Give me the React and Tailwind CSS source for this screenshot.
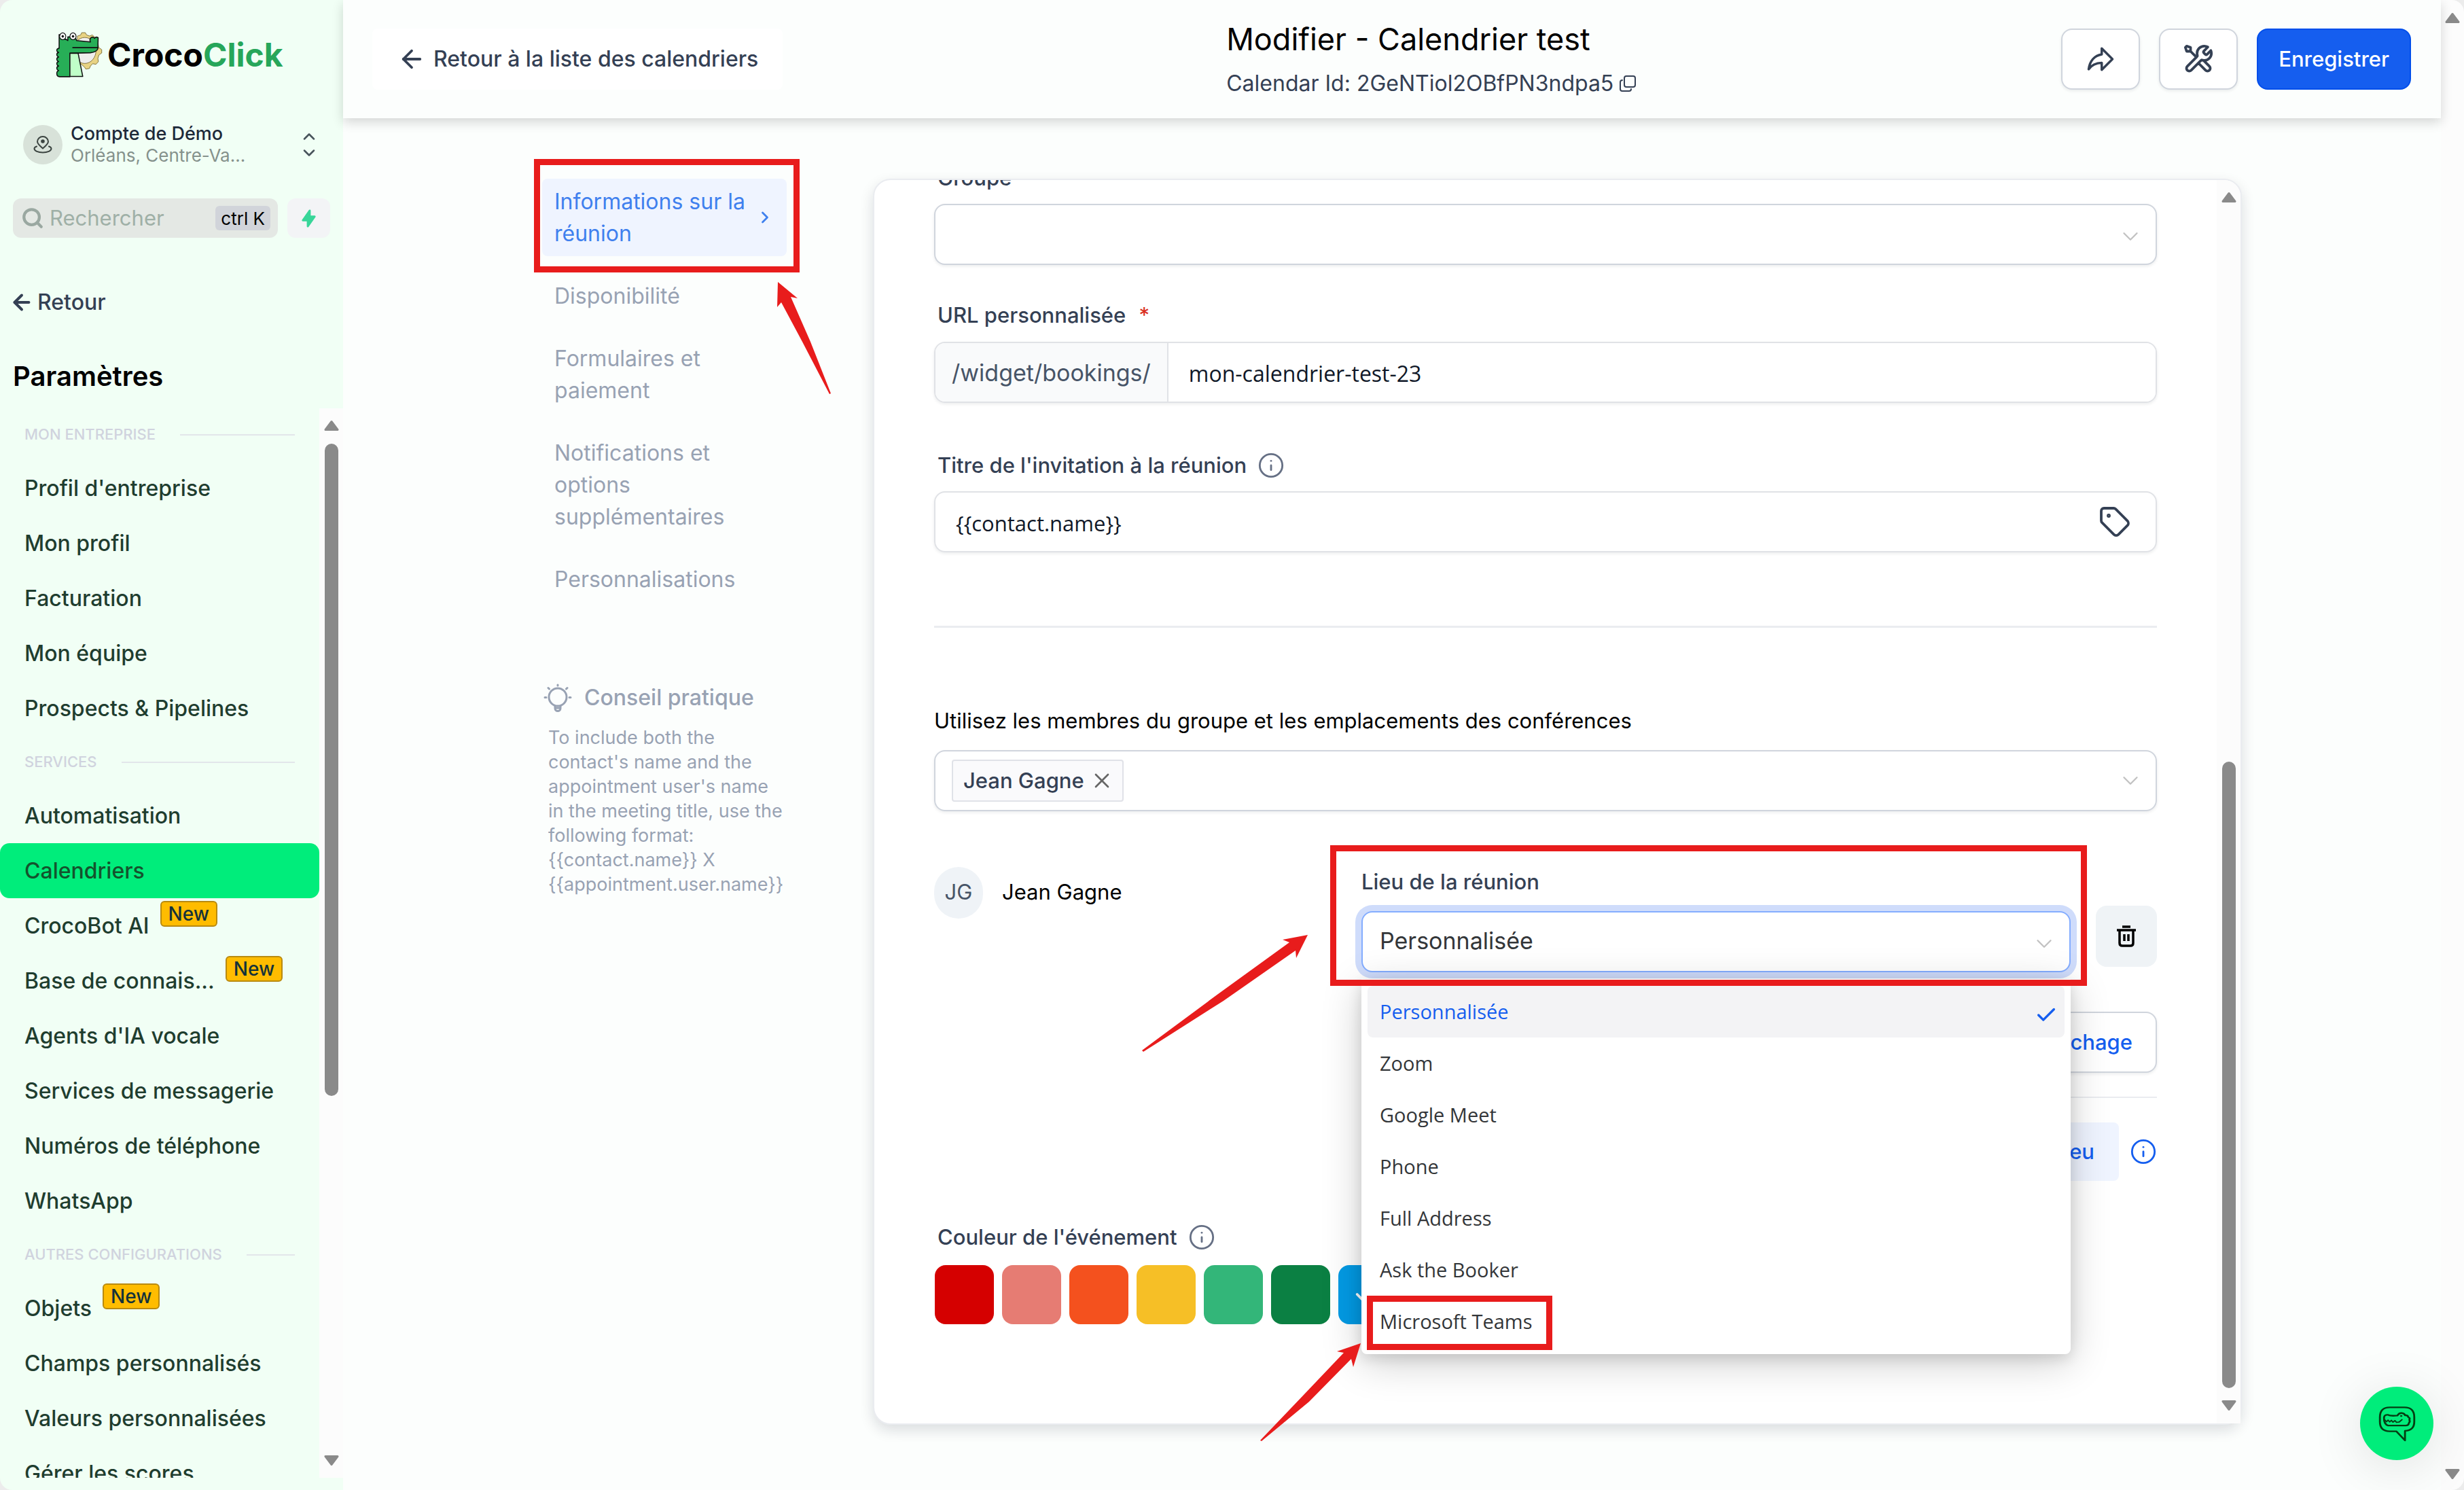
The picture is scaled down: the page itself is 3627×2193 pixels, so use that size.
import React from "react";
import { ArrowLeft, Check, ChevronDown, ChevronRight, ChevronUp, Info, Search, Tag, X } from "lucide-react";

const sections = [
  {
    title: "MON ENTREPRISE",
    items: [
      { label: "Profil d'entreprise" },
      { label: "Mon profil" },
      { label: "Facturation" },
      { label: "Mon équipe" },
      { label: "Prospects & Pipelines" },
    ],
  },
  {
    title: "SERVICES",
    items: [
      { label: "Automatisation" },
      { label: "Calendriers", active: true },
      { label: "CrocoBot AI", isNew: true },
      { label: "Base de connais...", isNew: true },
      { label: "Agents d'IA vocale" },
      { label: "Services de messagerie" },
      { label: "Numéros de téléphone" },
      { label: "WhatsApp" },
    ],
  },
  {
    title: "AUTRES CONFIGURATIONS",
    items: [
      { label: "Objets", isNew: true },
      { label: "Champs personnalisés" },
      { label: "Valeurs personnalisées" },
      { label: "Gérer les scores" },
    ],
  },
];

const steps = [
  "Disponibilité",
  "Formulaires et paiement",
  "Notifications et options supplémentaires",
  "Personnalisations",
];

const places = ["Personnalisée", "Zoom", "Google Meet", "Phone", "Full Address", "Ask the Booker", "Microsoft Teams"];

const colors = [
  ["Rouge", "bg-[#d50000]"],
  ["Rose", "bg-[#e67c73]"],
  ["Orange", "bg-[#f4511e]"],
  ["Jaune", "bg-[#f6bf26]"],
  ["Vert clair", "bg-[#33b679]"],
  ["Vert", "bg-[#0b8043]"],
  ["Bleu", "bg-[#039be5]"],
];

const fieldShadow = "shadow-[0_2px_4px_rgba(16,24,40,0.08)]";

function Triangle({ down }) {
  return (
    <svg viewBox="0 0 22 17" className={down ? "h-[17px] w-[22px] rotate-180" : "h-[17px] w-[22px]"} aria-hidden="true">
      <path d="M11 2.5 20 14.5H2Z" fill="#8a8a8a" stroke="#8a8a8a" strokeWidth="3" strokeLinejoin="round" />
    </svg>
  );
}

function CrocLogo() {
  return (
    <svg viewBox="212 108 188 166" preserveAspectRatio="none" className="h-[69px] w-[71px]" aria-hidden="true">
      <g stroke="#111" strokeWidth="4" strokeLinejoin="round" strokeLinecap="round">
        <path
          d="M300 125l12-4 4-8h14l5 8 12 4 10-4 10 8 2 12 10 6 3 18 12 8v12l-11 7-4 12 2 12-10 9-12-2-9 8-4 9-14 2-6-8-26-20Z"
          fill="#e8d384"
          stroke="#6b5b26"
          strokeWidth="2"
        />
        <ellipse cx="328" cy="176" rx="44" ry="46" fill="#efeeee" stroke="#6b5b26" strokeWidth="2" />
        <path
          d="M228 120V168q-10 2-9 9 1 5 7 6-8 2-7 9 1 6 7 7-8 2-7 9 1 6 7 7-8 2-7 9 1 6 7 7-8 2-7 9 1 6 7 7-8 3-7 12 0 9 11 10H270V186L350 184Q374 182 379 170L380 131Q372 126 366 133 358 125 350 133 346 138 350 146L296 141 290 128H262V141Q256 136 250 136Z"
          fill="#27ae57"
        />
        <path d="M270 186H302L320 268H270Z" fill="#c0ffc8" />
        <path d="M281 166H379" fill="none" />
        <circle cx="242" cy="126" r="12" fill="#fff" strokeWidth="3" />
        <circle cx="282" cy="126" r="12" fill="#fff" strokeWidth="3" />
        <circle cx="242" cy="126" r="4" fill="#111" strokeWidth="1" />
        <circle cx="282" cy="126" r="4" fill="#111" strokeWidth="1" />
      </g>
    </svg>
  );
}

function PinIcon() {
  return (
    <svg viewBox="0 0 28 26" className="h-[26px] w-[28px]" fill="none" stroke="#3b4440" strokeWidth="2" strokeLinecap="round" strokeLinejoin="round" aria-hidden="true">
      <path d="M14 18.500C9.500 14.500 6 11.500 6 8.500a8 7.500 0 0 1 16 0c0 3-3.500 6-8 10Z" />
      <circle cx="14" cy="8" r="1.800" fill="#3b4440" />
      <path d="M5 15.500c-2.300.8-3.500 1.900-3.500 3.300 0 3.400 5.600 5.700 12.500 5.700s12.500-2.300 12.500-5.700c0-1.400-1.200-2.500-3.500-3.300" />
    </svg>
  );
}

function BulbIcon() {
  return (
    <svg viewBox="0 0 42 42" className="h-[42px] w-[42px]" fill="none" stroke="#98a2b3" strokeWidth="3" strokeLinecap="round" aria-hidden="true">
      <circle cx="21" cy="20" r="13" />
      <path d="M17 33v3.500a4 4 0 0 0 8 0V33M17.500 36h7M21 2v1M2 20.500h2M38 20.500h2M7 6.500l1.500 1.500M35 6.500 33.500 8" />
    </svg>
  );
}

function TrashIcon() {
  return (
    <svg viewBox="0 0 30 32" className="h-[32px] w-[30px]" fill="none" stroke="#000" strokeWidth="3.500" aria-hidden="true">
      <path d="M9 2h12M1 7h28M5 8v18q0 4 4 4h12q4 0 4-4V8M12 13v10M18 13v10" />
    </svg>
  );
}

function ShareIcon() {
  return (
    <svg viewBox="0 0 24 24" className="h-[42px] w-[42px]" fill="none" stroke="#344054" strokeWidth="2" strokeLinejoin="round" aria-hidden="true">
      <path d="M22 12 13 3v5C7 9 3 13.500 2 20.500c2.600-3.600 6-5.200 11-5.300V21Z" />
    </svg>
  );
}

function ToolsIcon() {
  return (
    <svg viewBox="0 0 24 24" className="h-[46px] w-[46px]" fill="none" stroke="#344054" strokeWidth="2" strokeLinecap="round" strokeLinejoin="round" aria-hidden="true">
      <path d="M6 6L10.5 10.5M6 6H3L2 3L3 2L6 3V6ZM19.259 2.741L16.631 5.369C16.235 5.765 16.037 5.963 15.963 6.191C15.898 6.392 15.898 6.608 15.963 6.809C16.037 7.037 16.235 7.235 16.631 7.631L16.869 7.869C17.265 8.265 17.463 8.463 17.691 8.537C17.892 8.602 18.108 8.602 18.309 8.537C18.537 8.463 18.735 8.265 19.131 7.869L21.589 5.411C21.854 6.055 22 6.760 22 7.5C22 10.538 19.538 13 16.5 13C16.134 13 15.776 12.964 15.430 12.896C14.944 12.800 14.700 12.752 14.553 12.767C14.396 12.782 14.319 12.806 14.180 12.880C14.050 12.950 13.919 13.081 13.657 13.343L6.5 20.5C5.672 21.328 4.328 21.328 3.5 20.5C2.672 19.672 2.672 18.328 3.5 17.5L10.657 10.343C10.919 10.081 11.050 9.950 11.120 9.819C11.194 9.681 11.218 9.603 11.233 9.447C11.248 9.299 11.200 9.056 11.104 8.570C11.036 8.224 11 7.866 11 7.5C11 4.462 13.462 2 16.5 2C17.506 2 18.448 2.270 19.259 2.741ZM12 15L17.5 20.5C18.328 21.328 19.672 21.328 20.5 20.5C21.328 19.671 21.328 18.328 20.5 17.5L15.975 12.975C15.655 12.945 15.343 12.887 15.041 12.804C14.652 12.697 14.225 12.775 13.940 13.060L12 15Z" />
    </svg>
  );
}

function CopyIcon() {
  return (
    <svg viewBox="0 0 26 26" className="h-[26px] w-[26px]" fill="none" stroke="#344054" strokeWidth="2" strokeLinejoin="round" aria-hidden="true">
      <rect x="8" y="2" width="16" height="16" rx="3" />
      <path d="M5 8q-3 0-3 3v10q0 3 3 3h10q3 0 3-3" strokeLinecap="round" />
    </svg>
  );
}

function ChatCrocIcon() {
  return (
    <svg viewBox="1250 1110 142 158" preserveAspectRatio="none" className="h-[53px] w-[57px]" fill="none" stroke="#053d12" strokeWidth="7" strokeLinejoin="round" strokeLinecap="round" aria-hidden="true">
      <path d="M1294 1117H1348Q1384 1117 1384 1160V1180Q1384 1218 1350 1220V1262L1318 1222H1294Q1258 1222 1258 1180V1160Q1258 1117 1294 1117Z" />
      <path d="M1288 1197Q1272 1190 1273 1162 1274 1148 1288 1150 1296 1156 1322 1153 1328 1141 1338 1142 1348 1143 1350 1152 1360 1150 1362 1160 1370 1164 1366 1172 1370 1180 1364 1186 1364 1196 1352 1197Z" />
      <path d="M1276 1172l6 8 6-7 6 8 6-7 6 8 7-7 6 8 10-2 10-10" strokeWidth="5" />
      <circle cx="1336" cy="1155" r="3" fill="#053d12" strokeWidth="2" />
    </svg>
  );
}

function InfoButton({ blue }) {
  return (
    <button type="button" aria-label="Informations" className={blue ? "text-[#155eef]" : "text-[#667085]"}>
      <Info className="size-10" strokeWidth={1.7} />
    </button>
  );
}

function Sidebar() {
  return (
    <aside className="flex w-[505px] shrink-0 flex-col overflow-hidden bg-[#f1fff5]">
      <a href="#accueil" className="mt-[46px] flex items-center gap-[6px] pl-[81px]">
        <CrocLogo />
        <span className="text-[48px] leading-[66px] font-bold text-black">
          Croco<span className="text-[#27a65a]">Click</span>
        </span>
      </a>

      <button type="button" className="mt-[66px] flex items-center pr-[36px] pl-[34px] text-left">
        <span className="flex size-[58px] shrink-0 items-center justify-center rounded-full bg-[#d8e2d9]">
          <PinIcon />
        </span>
        <span className="ml-3 flex flex-1 flex-col leading-8">
          <span className="text-[27px] font-medium text-[#1d2939]">Compte de Démo</span>
          <span className="text-[26px] text-[#85918c]">Orléans, Centre-Va...</span>
        </span>
        <span className="flex flex-col text-[#48545b]">
          <ChevronUp className="-mb-1 size-7" strokeWidth={2.2} />
          <ChevronDown className="size-7" strokeWidth={2.2} />
        </span>
      </button>

      <div className="mt-[47px] flex gap-[14px] px-[19px]">
        <div className="flex h-[58px] flex-1 items-center rounded-xl bg-[#e4e8e4] pr-[11px] pl-3">
          <Search className="size-[34px] shrink-0 text-[#9aa8a1]" strokeWidth={3} />
          <input
            type="text"
            aria-label="Rechercher"
            placeholder="Rechercher"
            className="ml-2 w-0 flex-1 bg-transparent text-[31px] outline-none placeholder:text-[#9fb0a7]"
          />
          <kbd className="flex h-9 items-center rounded-md bg-[#d1d4da] px-[8px] font-[Inter] text-[26px] text-black">ctrl K</kbd>
        </div>
        <button type="button" aria-label="Actions rapides" className="flex h-[58px] w-[63px] items-center justify-center rounded-xl bg-[#f3f4f6]">
          <svg viewBox="0 0 20 20" className="size-[29px]" fill="#38d699" aria-hidden="true">
            <path d="M11.300 1.046A1 1 0 0112 2v5h4a1 1 0 01.82 1.573l-7 10A1 1 0 018 18v-5H4a1 1 0 01-.82-1.573l7-10a1 1 0 011.120-.38z" />
          </svg>
        </button>
      </div>

      <a href="#retour" className="mt-[72px] flex items-center gap-[5px] pl-[14px] text-[32px] leading-[46px] font-medium text-[#344054]">
        <ArrowLeft className="size-[36px]" strokeWidth={2.6} />
        Retour
      </a>
      <h2 className="mt-[56px] pl-[19px] text-[40px] leading-[60px] font-semibold text-black">Paramètres</h2>

      <div className="mt-[17px] mb-[18px] flex min-h-0 flex-1">
        <nav aria-label="Paramètres" className="h-full flex-1 overflow-hidden">
          {sections.map((section) => (
            <section key={section.title}>
              <h3 className="flex h-[77px] items-center gap-9 pr-9 pl-9 text-[22px] font-medium text-[#d0d3de]">
                {section.title}
                <span className="h-[2px] flex-1 bg-[#e2e6ea]" />
              </h3>
              <ul>
                {section.items.map((item) => (
                  <li key={item.label}>
                    <a
                      href="#reglage"
                      className={
                        item.active
                          ? "flex h-[81px] items-center rounded-[14px] bg-[#00ed7b] pl-9 text-[32px] font-medium text-[#14532d]"
                          : "flex h-[81px] items-center pl-9 text-[32px] font-medium text-[#1f3d2f]"
                      }
                    >
                      <span className="leading-[46px] whitespace-nowrap">{item.label}</span>
                      {item.isNew && (
                        <span className="mt-1 ml-4 flex h-[38px] items-center self-start rounded-md border-2 border-[#b98a10] bg-[#ffbc00] px-[10px] text-[28px] text-[#14323a]">
                          New
                        </span>
                      )}
                    </a>
                  </li>
                ))}
              </ul>
            </section>
          ))}
        </nav>
        <div className="flex w-[35px] flex-col items-center bg-[#fcfcfc] pt-[17px] pb-[17px]">
          <Triangle />
          <div className="mt-[18px] h-[960px] w-5 rounded-full bg-[#8a8a8a]" />
          <div className="flex-1" />
          <Triangle down />
        </div>
      </div>
    </aside>
  );
}

function Header() {
  return (
    <header className="z-10 flex h-[174px] shrink-0 items-center justify-between bg-[#fcfefd] pr-11 pl-[43px] shadow-[0_6px_16px_rgba(0,0,0,0.16)]">
      <button type="button" className="flex h-[90px] items-center gap-[11px] rounded-lg bg-white pr-9 pl-[37px] text-[32px] font-medium text-[#344054]">
        <ArrowLeft className="size-[42px]" strokeWidth={2.2} />
        Retour à la liste des calendriers
      </button>
      <div className="pl-7">
        <h1 className="text-[45px] leading-[60px] text-black">Modifier - Calendrier test</h1>
        <p className="mt-3 flex items-center gap-2 text-[32px] leading-[46px] text-[#344054]">
          Calendar Id: 2GeNTiol2OBfPN3ndpa5
          <button type="button" aria-label="Copier l'identifiant">
            <CopyIcon />
          </button>
        </p>
      </div>
      <div className="flex gap-7">
        <button type="button" aria-label="Partager" className={`flex h-[90px] w-[116px] items-center justify-center rounded-2xl border-2 border-[#d0d5dd] bg-white ${fieldShadow}`}>
          <ShareIcon />
        </button>
        <button type="button" aria-label="Outils" className={`flex h-[90px] w-[116px] items-center justify-center rounded-2xl border-2 border-[#d0d5dd] bg-white ${fieldShadow}`}>
          <ToolsIcon />
        </button>
        <button type="button" className="h-[90px] rounded-2xl border-2 border-[#004eeb] bg-[#155eef] px-[30px] text-[31px] font-medium text-white">
          Enregistrer
        </button>
      </div>
    </header>
  );
}

function StepNav() {
  return (
    <div className="w-[360px] shrink-0">
      <nav aria-label="Étapes" className="flex flex-col gap-[25px] text-[32px] leading-[47px]">
        <div className="relative">
          <a href="#infos" aria-current="step" className="flex items-center justify-between rounded-lg bg-[#eff4ff] py-[10px] pr-[18px] pl-[18px] text-[#3f80ee]">
            <span className="w-[300px]">Informations sur la réunion</span>
            <ChevronRight className="size-[28px] shrink-0" strokeWidth={2.4} />
          </a>
          <div className="absolute -top-[29px] -right-[19px] -bottom-[24px] -left-[12px] border-[9px] border-[#e81c1c]" />
          <svg viewBox="0 0 80 166" className="absolute top-[152px] left-[346px] h-[166px] w-[80px]" fill="#e81c1c" aria-hidden="true">
            <path d="M1 0 30 24 20 22 49 88 79 164 77 165 37 88 6 30 0 37Z" />
          </svg>
        </div>
        {steps.map((step) => (
          <a key={step} href="#etape" className="py-[10px] pr-10 pl-[18px] text-[#98a2b3]">
            {step}
          </a>
        ))}
      </nav>
      <div className="mt-[118px] flex items-center gap-[18px] pl-[2px]">
        <BulbIcon />
        <h2 className="text-[32px] leading-[46px] font-medium text-[#98a2b3]">Conseil pratique</h2>
      </div>
      <p className="mt-[18px] pl-[9px] text-[27px] leading-9 text-[#98a2b3]">
        To include both the contact's name and the appointment user's name in the meeting title, use the following format: {"{{contact.name}}"} X {"{{appointment.user.name}}"}
      </p>
    </div>
  );
}

function LocationField() {
  return (
    <div className="relative flex-1">
      <label htmlFor="lieu" className="block text-[31px] leading-[46px] font-medium text-[#344054]">
        Lieu de la réunion
      </label>
      <div className="relative mt-5">
        <select
          id="lieu"
          defaultValue="Personnalisée"
          className="h-[90px] w-full appearance-none rounded-2xl border-2 border-[#84adff] bg-white px-[25px] pb-1 text-[34px] text-[#333639] shadow-[0_0_0_9px_#cfdcfb] outline-none"
        >
          {places.map((place) => (
            <option key={place}>{place}</option>
          ))}
        </select>
        <ChevronDown className="pointer-events-none absolute top-[29px] right-[20px] size-[38px] text-[#c2c2c2]" strokeWidth={1.5} />
      </div>

      <ul
        role="listbox"
        aria-label="Lieu de la réunion"
        className="absolute top-full right-0 left-0 z-10 mt-[10px] rounded-b-lg bg-white px-[9px] py-[10px] font-['Open_Sans'] text-[29px] text-[#333639] shadow-[0_12px_60px_rgba(0,0,0,0.2),0_6px_20px_rgba(0,0,0,0.12)]"
      >
        {places.map((place, i) => (
          <li
            key={place}
            role="option"
            aria-selected={i === 0}
            className={
              i === 0
                ? "flex h-19 items-center justify-between rounded-lg bg-[#f3f3f5] pr-[10px] pl-[18px] text-[#155eef]"
                : "flex h-19 items-center pl-[18px]"
            }
          >
            <span className="relative">
              {place}
              {place === "Microsoft Teams" && <span className="absolute -top-[16px] -right-[29px] -bottom-[20px] -left-[19px] border-[9px] border-[#e81c1c]" />}
            </span>
            {i === 0 && <Check className="mt-[10px] size-[34px]" strokeWidth={2.4} />}
          </li>
        ))}
        <svg viewBox="0 0 149 145" className="absolute right-full -bottom-[129px] h-[145px] w-[149px]" fill="#e81c1c" aria-hidden="true">
          <path d="M148 0 113 12 123 14 64 76 0 143 2 144 72 86 134 23 137 35Z" />
        </svg>
      </ul>

      <div className="absolute -top-[31px] -right-[24px] -bottom-[20px] -left-[46px] z-20 border-[9px] border-[#e81c1c]" />
      <svg viewBox="0 0 245 172" className="absolute top-[101px] -left-[323px] h-[172px] w-[245px]" fill="#e81c1c" aria-hidden="true">
        <path d="M244 0 207 7 217 11 112 87 0 170 2 172 120 97 226 23 227 34Z" />
      </svg>
    </div>
  );
}

function FormCard() {
  return (
    <div className="flex min-w-0 flex-1 rounded-[26px] border-2 border-[#eaecf0] bg-white shadow-[0_8px_20px_rgba(16,24,40,0.14)]">
      <form className="min-w-0 flex-1 pr-[88px] pl-[88px] [clip-path:inset(0_0_-60px_0)]">
        <label htmlFor="groupe" className="-mt-[26px] block pl-[5px] text-[31px] leading-[46px] font-medium text-[#344054]">
          Groupe
        </label>
        <div className="relative mt-[15px]">
          <select id="groupe" className={`h-[90px] w-full appearance-none rounded-2xl border-2 border-[#d0d5dd] bg-white px-6 ${fieldShadow}`} />
          <ChevronDown className="pointer-events-none absolute top-[29px] right-[20px] size-[38px] text-[#c2c2c2]" strokeWidth={1.5} />
        </div>

        <label htmlFor="url" className="mt-[51px] block pl-[5px] text-[31px] leading-[46px] font-medium text-[#344054]">
          URL personnalisée <span className="ml-[11px] font-normal text-[#d92d20]">*</span>
        </label>
        <div className={`mt-4 flex h-[90px] overflow-hidden rounded-2xl border-2 border-[#e0e2e6] ${fieldShadow}`}>
          <span className="flex items-center border-r-2 border-[#e0e2e6] bg-[#f9fafb] px-6 text-[34px] text-[#475467]">/widget/bookings/</span>
          <input id="url" type="text" defaultValue="mon-calendrier-test-23" className="min-w-0 flex-1 bg-white px-[30px] pt-1 font-['Open_Sans'] text-[32px] text-[#101828] outline-none" />
        </div>

        <div className="mt-[69px] flex h-[46px] items-center gap-4 pl-[5px]">
          <label htmlFor="titre" className="text-[31px] font-medium text-[#344054]">
            Titre de l'invitation à la réunion
          </label>
          <InfoButton />
        </div>
        <div className={`mt-[15px] flex h-[90px] items-center rounded-2xl border-2 border-[#e0e2e6] pr-[36px] pl-[30px] ${fieldShadow}`}>
          <input id="titre" type="text" defaultValue="{{contact.name}}" className="min-w-0 flex-1 bg-transparent pt-1 font-['Open_Sans'] text-[31px] text-[#101828] outline-none" />
          <button type="button" aria-label="Insérer une étiquette" className="text-[#344054]">
            <Tag className="size-12" strokeWidth={1.9} />
          </button>
        </div>

        <hr className="mt-[108px] border-t-[3px] border-[#eaecf0]" />

        <label htmlFor="membres" className="mt-[114px] block text-[31px] leading-[46px] text-black">
          Utilisez les membres du groupe et les emplacements des conférences
        </label>
        <div className={`mt-5 flex h-[90px] items-center rounded-2xl border-2 border-[#d0d5dd] pr-[18px] pl-6 ${fieldShadow}`}>
          <span className="flex h-[62px] items-center gap-2 rounded-sm border-2 border-[#e0e2e8] bg-[#fafafc] pr-3 pl-[15px] text-[31px] font-medium text-[#344054]">
            Jean Gagne
            <button type="button" aria-label="Retirer Jean Gagne" className="text-[#666]">
              <X className="size-[36px]" strokeWidth={1.8} />
            </button>
          </span>
          <input id="membres" type="text" className="min-w-0 flex-1 bg-transparent px-3 text-[31px] outline-none" />
          <ChevronDown className="size-[38px] text-[#c2c2c2]" strokeWidth={1.5} />
        </div>

        <div className="mt-[81px] flex">
          <div className="flex h-[77px] w-[629px] shrink-0 items-center gap-7">
            <span className="flex h-[76px] w-[72px] items-center justify-center rounded-full bg-[#eff3f7] text-[31px] text-[#475467]">JG</span>
            <span className="text-[31px] text-black">Jean Gagne</span>
          </div>
          <div className="min-w-0 flex-1">
            <div className="flex items-end gap-[37px]">
              <LocationField />
              <button type="button" aria-label="Supprimer" className="mb-2 flex size-[90px] items-center justify-center rounded-2xl bg-[#eff3f6]">
                <TrashIcon />
              </button>
            </div>
            <div className="mt-[58px] flex justify-end">
              <button type="button" className={`h-[90px] rounded-2xl border-2 border-[#d0d5dd] bg-white px-[34px] text-[31px] font-medium text-[#155eef] ${fieldShadow}`}>
                Gérer l'affichage
              </button>
            </div>
            <hr className="mt-[35px] border-t-2 border-[#eaecf0]" />
            <div className="mt-9 flex items-center justify-end gap-4">
              <button type="button" className="h-[86px] rounded-lg bg-[#eff4ff] px-9 text-[31px] font-medium text-[#155eef]">
                Ajouter un lieu
              </button>
              <InfoButton blue />
            </div>
          </div>
        </div>

        <fieldset className="mt-[60px]">
          <legend className="flex h-[46px] items-center gap-4 pl-[5px] text-[31px] font-medium text-[#344054]">
            Couleur de l'événement
            <InfoButton />
          </legend>
          <div className="mt-[18px] flex gap-3 pl-px">
            {colors.map(([name, bg], i) => (
              <span key={name} className="relative size-[87px]">
                <input type="radio" name="couleur" aria-label={name} defaultChecked={i === 6} className={`size-[87px] appearance-none rounded-2xl ${bg}`} />
                {i === 6 && <Check className="pointer-events-none absolute inset-5 size-[46px] text-white" strokeWidth={2} />}
              </span>
            ))}
          </div>
        </fieldset>
      </form>
      <div className="flex w-[35px] flex-col items-center rounded-tr-[24px] bg-[#fcfcfc] pt-[17px] pb-[18px]">
        <Triangle />
        <div className="min-h-0 flex-1" />
        <div className="h-[922px] w-5 rounded-full bg-[#8a8a8a]" />
        <div className="mt-[17px]">
          <Triangle down />
        </div>
      </div>
    </div>
  );
}

export default function App() {
  return (
    <div className="h-screen bg-[#ececec] font-[Inter,sans-serif]">
      <div className="relative flex h-full overflow-hidden rounded-[18px]">
        <Sidebar />
        <main className="flex min-w-0 flex-1 flex-col bg-[#fcfefd]">
          <Header />
          <div className="flex min-h-0 flex-1 gap-[127px] px-[293px] pt-[89px] pb-[96px]">
            <StepNav />
            <FormCard />
          </div>
        </main>
        <div className="flex w-[34px] flex-col items-center justify-between bg-[#fcfcfc] pt-[18px] pb-[15px]">
          <Triangle />
          <Triangle down />
        </div>
        <button
          type="button"
          aria-label="Ouvrir le chat"
          className="absolute right-[45px] bottom-11 flex size-[108px] items-center justify-center rounded-full bg-[#00ed7b] shadow-[0_10px_80px_rgba(0,0,0,0.12)]"
        >
          <ChatCrocIcon />
        </button>
      </div>
    </div>
  );
}
